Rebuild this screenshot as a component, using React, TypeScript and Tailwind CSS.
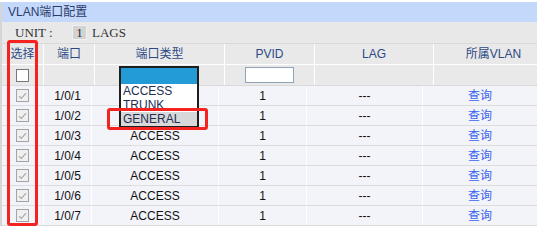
import React from 'react';

const PORTS = ['1/0/1', '1/0/2', '1/0/3', '1/0/4', '1/0/5', '1/0/6', '1/0/7'];

const HEAD_COLS = 'grid grid-cols-[42px_51px_130px_90px_119px_120px]';
const BODY_COLS = 'grid grid-cols-[42px_48px_127px_88px_116px_114px]';

const cjk = "font-['Liberation_Sans','Noto_Sans_CJK_SC',sans-serif]";

const GrayCheck: React.FC = () => (
  <span className="w-[13px] h-[13px] border border-[#a3a3a3] bg-[#f0f0f0] flex items-center justify-center">
    <svg width="9" height="8" viewBox="0 0 9 8">
      <path d="M1 4.2 L3.4 6.4 L8 1.2" fill="none" stroke="#aaaaaa" strokeWidth="1.2" />
    </svg>
  </span>
);

const VlanPortConfig: React.FC = () => {
  return (
    <div className={`relative w-[537px] h-[227px] overflow-hidden bg-white pt-[2px] ${cjk}`}>
      <div className="border-l-2 border-[#d6d6d6] w-[560px]">
        {/* Title */}
        <div className="h-[20px] bg-[#c4d8fc] flex items-center pl-[6px] text-[12px] text-[#2b3d6b]">
          VLAN端口配置
        </div>

        {/* Unit row */}
        <div className="h-[21px] bg-[#e8e8e8] flex items-center font-['Liberation_Serif',serif] text-[13px] text-[#333]">
          <span className="ml-[13px] w-[57px]">UNIT :</span>
          <span className="w-[15px] h-[15px] bg-[#d3d3d3] border border-[#f0f0f0] flex items-center justify-center text-[12px] text-[#222]">1</span>
          <span className="ml-[5px] text-[13px]">LAGS</span>
        </div>

        {/* Header */}
        <div className={`${HEAD_COLS} h-[21px] bg-[#e9e9e9] border-t border-[#dadada] text-[12px] text-[#2d4a85]`}>
          {['选择', '端口', '端口类型', 'PVID', 'LAG', '所属VLAN'].map((h) => (
            <div key={h} className="flex items-center justify-center border-r border-white">
              {h}
            </div>
          ))}
        </div>

        {/* Filter row */}
        <div className={`${HEAD_COLS} h-[22px] bg-[#e9e9e9] border-t border-white border-b border-b-[#dadada]`}>
          <div className="flex items-center justify-center border-r border-white">
            <span className="w-[13px] h-[13px] border border-[#777] bg-white" />
          </div>
          <div className="border-r border-white" />
          <div className="border-r border-white" />
          <div className="flex items-center justify-center border-r border-white">
            <span className="w-[49px] h-[16px] border border-[#8ea2b8] bg-white" />
          </div>
          <div className="border-r border-white" />
          <div />
        </div>

        {/* Body */}
        {PORTS.map((p, i) => (
          <div
            key={p}
            className={`${BODY_COLS} h-[20px] bg-[#f3f4f9] border-b border-[#dcdcdc] text-[12px] font-['Liberation_Sans',sans-serif] text-[#111]`}
          >
            <div className="flex items-center justify-center border-r border-white">
              <GrayCheck />
            </div>
            <div className="flex items-center justify-center border-r border-white">{p}</div>
            {/* first two rows sit under the open select list */}
            <div className="flex items-center justify-center border-r border-white">{i < 2 ? '' : 'ACCESS'}</div>
            <div className="flex items-center justify-center border-r border-white">1</div>
            <div className="flex items-center justify-center border-r border-white">---</div>
            <div className={`flex items-center justify-center text-[#3a63f0] ${cjk}`}>查询</div>
          </div>
        ))}
      </div>

      {/* Open select list */}
      <div className="absolute left-[119px] top-[66px] w-[80px] h-[62px] border-2 border-[#1e1e1e] bg-white flex flex-col font-['Liberation_Sans',sans-serif] text-[12px] text-[#1d2e55] leading-[14px]">
        <div className="h-[16px] bg-[#229bd7]" />
        <div className="h-[14px] pl-[2px]">ACCESS</div>
        <div className="h-[14px] pl-[2px]">TRUNK</div>
        <div className="h-[14px] pl-[2px] bg-[#d8d8d8]">GENERAL</div>
      </div>

      {/* Highlights */}
      <div className="absolute left-[7px] top-[40px] w-[31px] h-[186px] border-[3px] border-[#f5231f] rounded-[3px]" />
      <div className="absolute left-[107px] top-[108px] w-[101px] h-[22px] border-[3px] border-[#f5231f] rounded-[3px]" />
    </div>
  );
};

export default VlanPortConfig;
